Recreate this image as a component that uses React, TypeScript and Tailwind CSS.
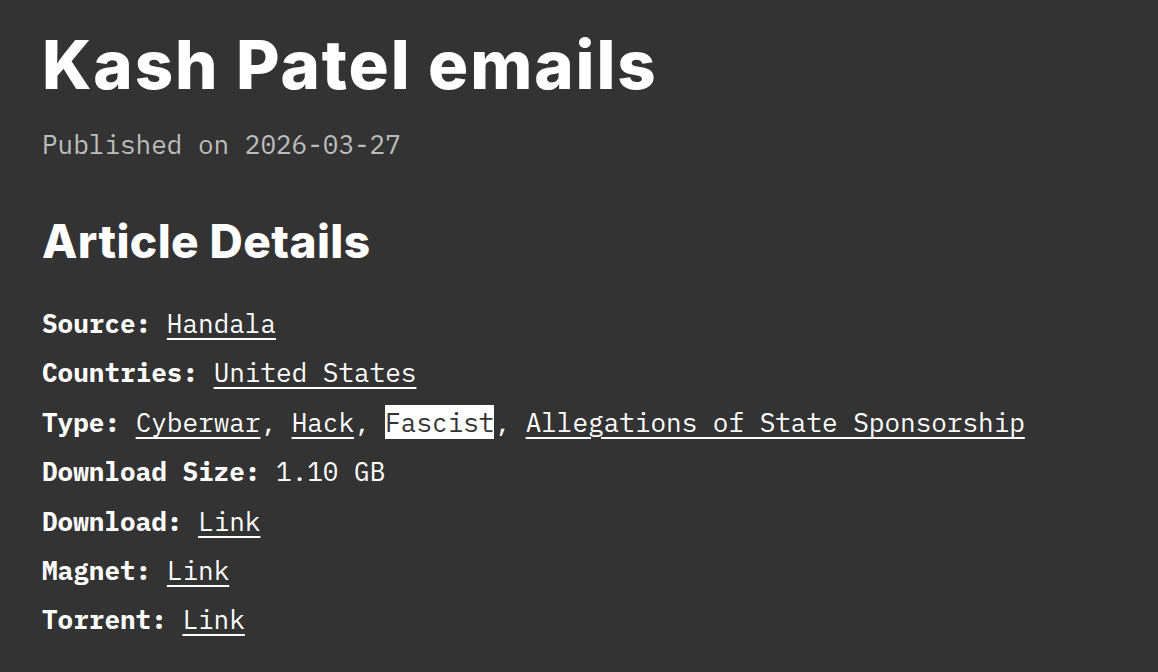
const mono = "font-['IBM_Plex_Mono','Liberation_Mono',monospace]";

function A({ children, hl }: { children: React.ReactNode; hl?: boolean }) {
  return (
    <a
      href="#"
      className={
        hl
          ? "bg-white text-[#333333] no-underline"
          : "text-white underline decoration-2 underline-offset-[5px]"
      }
    >
      {children}
    </a>
  );
}

function Row({ label, children }: { label: string; children: React.ReactNode }) {
  return (
    <p className="h-[49.4px] leading-[49px]">
      <span className="font-bold">{label}:</span> {children}
    </p>
  );
}

export default function App() {
  return (
    <div className="min-h-screen bg-[#333333] text-white px-[42px] pt-[21px]">
      <h1 className="font-['Inter',sans-serif] font-extrabold text-[67px] leading-[88px] tracking-[1.9px]">
        Kash Patel emails
      </h1>
      <p className={`${mono} text-[26px] text-[#bdbdbd] mt-[16px] leading-[38px]`}>
        Published on 2026-03-27
      </p>
      <h2 className="font-['Inter',sans-serif] font-extrabold text-[46px] leading-[60px] tracking-[0.4px] mt-[48px]">
        Article Details
      </h2>
      <div className={`${mono} text-[26px] mt-[28px]`}>
        <Row label="Source">
          <A>Handala</A>
        </Row>
        <Row label="Countries">
          <A>United States</A>
        </Row>
        <Row label="Type">
          <A>Cyberwar</A>, <A>Hack</A>, <A hl>Fascist</A>, <A>Allegations of State Sponsorship</A>
        </Row>
        <Row label="Download Size">1.10 GB</Row>
        <Row label="Download">
          <A>Link</A>
        </Row>
        <Row label="Magnet">
          <A>Link</A>
        </Row>
        <Row label="Torrent">
          <A>Link</A>
        </Row>
      </div>
    </div>
  );
}
